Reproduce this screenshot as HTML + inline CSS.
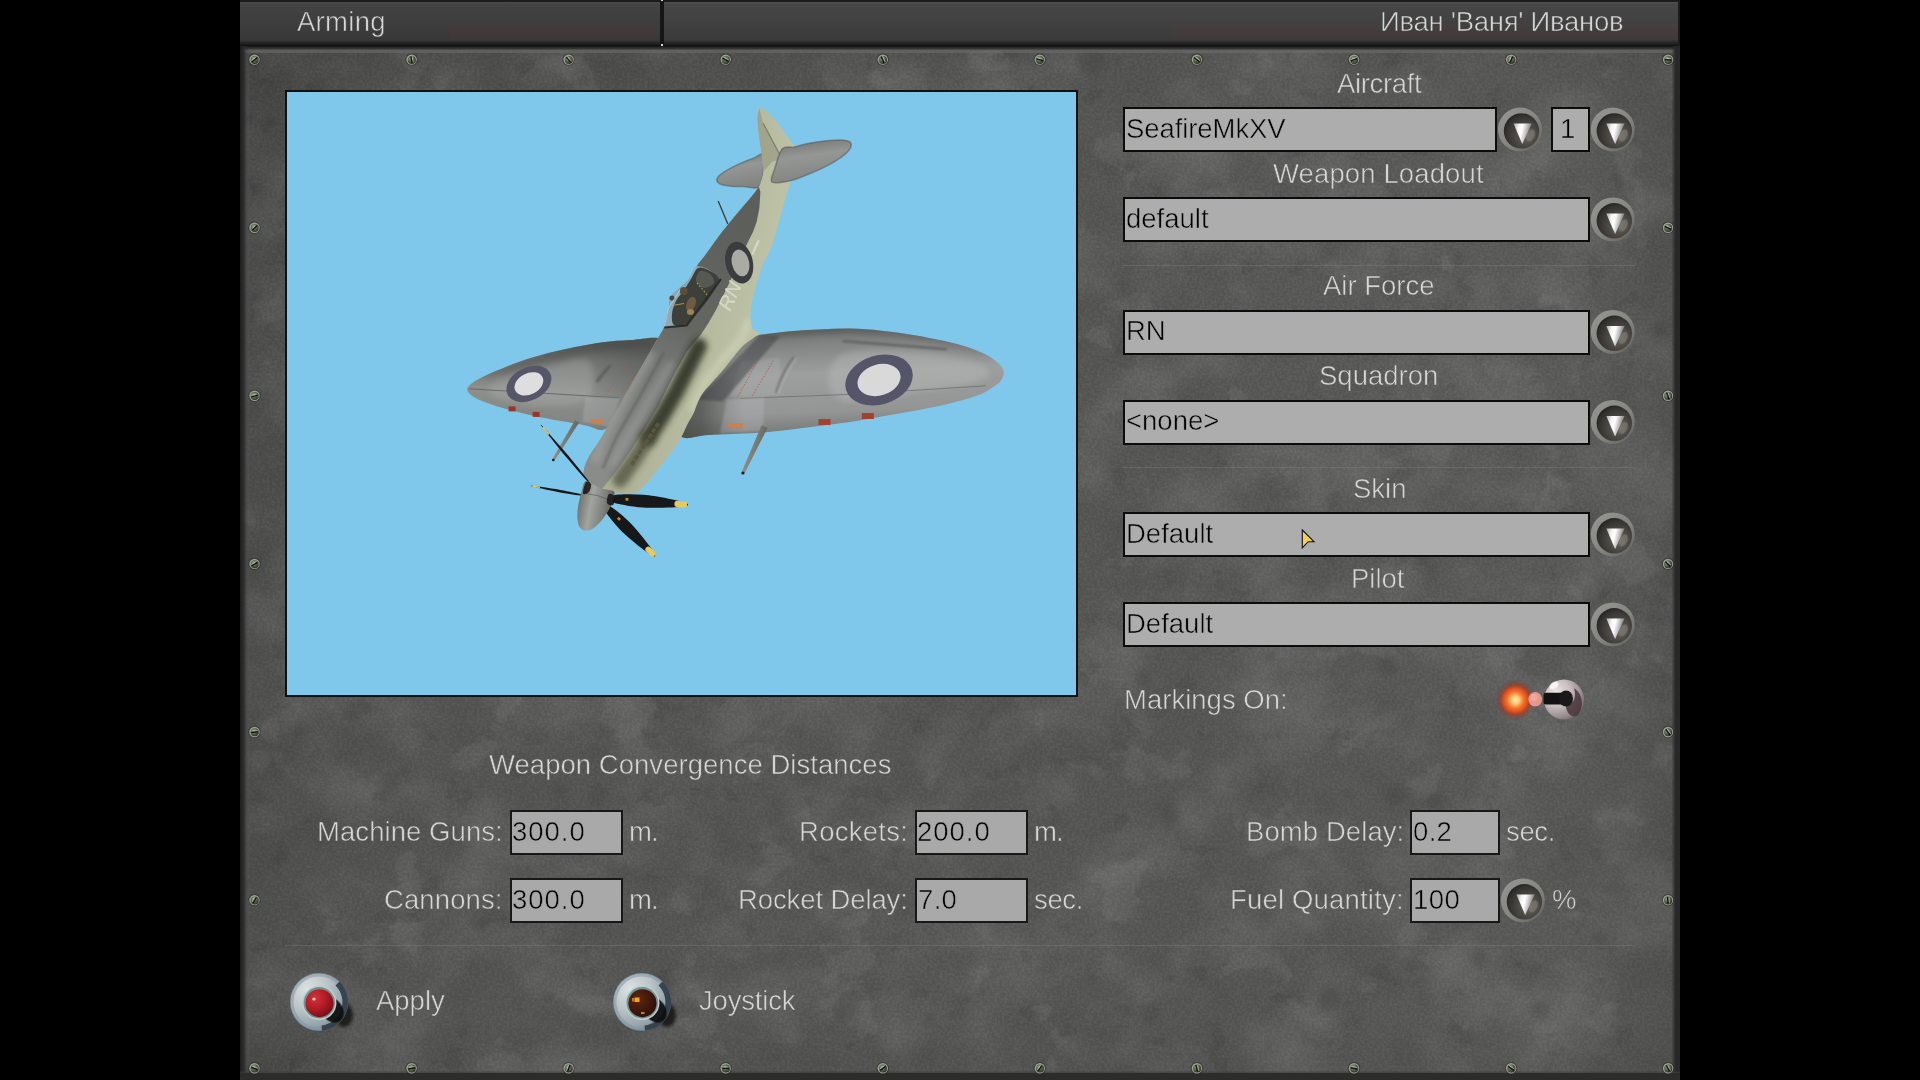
<!DOCTYPE html>
<html lang="en">
<head>
<meta charset="utf-8">
<title>Arming</title>
<style>
html,body{margin:0;padding:0;background:#000;}
body{width:1920px;height:1080px;overflow:hidden;position:relative;font-family:"Liberation Sans",sans-serif;font-size:27.5px;}
.abs{position:absolute;}
#barL{position:absolute;left:240px;top:0;width:420px;height:46px;background:linear-gradient(#1c1c1c 0,#1c1c1c 2px,#4c4c4c 2px,#434343 4px,#3e3e3e 22px,#383838 40px,#2a2a2a 42px,#1a1a1a 45px,#0c0c0c 46px);}
#barR{position:absolute;left:664px;top:0;width:1014px;height:46px;background:linear-gradient(#1c1c1c 0,#1c1c1c 2px,#525252 2px,#474747 4px,#414141 22px,#3a3a3a 40px,#2a2a2a 42px,#1a1a1a 45px,#0c0c0c 46px);border-right:2px solid #1c1c1c;}
#barGap{position:absolute;left:660px;top:0;width:4px;height:46px;background:#161616;}
#panel{position:absolute;left:240px;top:46px;width:1440px;height:1034px;background:#5f5f5d;overflow:hidden;}
.t{will-change:transform;position:absolute;white-space:nowrap;line-height:32px;height:32px;color:#d6d6d6;-webkit-text-stroke:0.55px #5a5a59;}
.k{color:#000;-webkit-text-stroke:0.55px #adadad;}
.b{-webkit-text-stroke:0.55px #414141;}
.k2{-webkit-text-stroke:0.55px #a9a9a9;}
.box{position:absolute;box-sizing:border-box;border:2px solid #0c0c0c;background:#adadad;height:45px;}
.sep{position:absolute;height:1px;background:rgba(150,150,146,.26);}
</style>
</head>
<body>
<div id="barL"><div class="abs" style="left:210px;top:23px;width:208px;height:17px;background:rgba(96,56,52,.15)"></div></div><div id="barGap"><div class="abs" style="left:1px;top:0;width:2px;height:1px;background:#d8d8d8"></div><div class="abs" style="left:1px;top:44px;width:2px;height:1.5px;background:#d8d8d8"></div></div><div id="barR"><div class="abs" style="left:507px;top:23px;width:506px;height:17px;background:rgba(96,56,52,.14)"></div></div>
<div id="panel">
<svg class="abs" style="left:0;top:0" width="1440" height="1034" viewBox="0 0 1440 1034">
<defs>
<filter id="tex" x="0" y="0" width="100%" height="100%" color-interpolation-filters="sRGB">
<feTurbulence type="fractalNoise" baseFrequency="0.011 0.013" numOctaves="5" seed="7" result="n"/>
<feColorMatrix in="n" type="matrix" values="0 0 0 0 0.62  0 0 0 0 0.62  0 0 0 0 0.62  2.6 0 0 0 -1.12"/>
</filter>
<filter id="tex2" x="0" y="0" width="100%" height="100%" color-interpolation-filters="sRGB">
<feTurbulence type="fractalNoise" baseFrequency="0.02 0.022" numOctaves="4" seed="23" result="n"/>
<feColorMatrix in="n" type="matrix" values="0 0 0 0 0.2  0 0 0 0 0.2  0 0 0 0 0.2  0 2.4 0 0 -1.18"/>
</filter>
<filter id="tex3" x="0" y="0" width="100%" height="100%" color-interpolation-filters="sRGB">
<feTurbulence type="fractalNoise" baseFrequency="0.014 0.016" numOctaves="5" seed="41" result="n"/>
<feColorMatrix in="n" type="matrix" values="0 0 0 0 0.72  0 0 0 0 0.73  0 0 0 0 0.72  14 0 0 0 -9.3"/>
</filter>
<filter id="tex4" x="0" y="0" width="100%" height="100%" color-interpolation-filters="sRGB">
<feTurbulence type="fractalNoise" baseFrequency="0.03 0.034" numOctaves="4" seed="77" result="n"/>
<feColorMatrix in="n" type="matrix" values="0 0 0 0 0.18  0 0 0 0 0.18  0 0 0 0 0.17  0 -12 0 0 3.9"/>
</filter>
<linearGradient id="vdiag" x1="0" y1="0.15" x2="1" y2="0"><stop offset="0" stop-color="#000" stop-opacity=".02"/><stop offset="0.4" stop-color="#000" stop-opacity="0"/><stop offset="0.55" stop-color="#fff" stop-opacity="0"/><stop offset="0.8" stop-color="#fff" stop-opacity=".025"/><stop offset="1" stop-color="#fff" stop-opacity=".03"/></linearGradient>
<filter id="grain" x="0" y="0" width="100%" height="100%" color-interpolation-filters="sRGB">
<feTurbulence type="fractalNoise" baseFrequency="0.4" numOctaves="2" seed="3" result="n"/>
<feColorMatrix in="n" type="matrix" values="3 0 0 0 -1.12  3 0 0 0 -1.12  3 0 0 0 -1.12  0 0 0 0 1"/>
</filter>
<filter id="cb"><feGaussianBlur stdDeviation="3"/></filter>
<linearGradient id="vre" x1="0" y1="0" x2="1" y2="0"><stop offset="0" stop-color="#282828" stop-opacity="0"/><stop offset="1" stop-color="#282828" stop-opacity="1"/></linearGradient>
<linearGradient id="vle" x1="0" y1="0" x2="1" y2="0"><stop offset="0" stop-color="#1e1e1e" stop-opacity="1"/><stop offset="0.3" stop-color="#262626" stop-opacity=".9"/><stop offset="0.6" stop-color="#2c2c2c" stop-opacity=".45"/><stop offset="1" stop-color="#2c2c2c" stop-opacity="0"/></linearGradient>
<linearGradient id="vte" x1="0" y1="0" x2="0" y2="1"><stop offset="0" stop-color="#101010"/><stop offset="0.3" stop-color="#282828"/><stop offset="1" stop-color="#484848"/></linearGradient>
<linearGradient id="vl" x1="0" y1="0" x2="1" y2="0"><stop offset="0" stop-color="#000" stop-opacity=".09"/><stop offset="0.035" stop-color="#000" stop-opacity=".05"/><stop offset="0.09" stop-color="#000" stop-opacity="0"/><stop offset="0.92" stop-color="#000" stop-opacity="0"/><stop offset="1" stop-color="#000" stop-opacity=".1"/></linearGradient>
<radialGradient id="vtl" cx="0" cy="0" r="1"><stop offset="0" stop-color="#000" stop-opacity=".1"/><stop offset="0.5" stop-color="#000" stop-opacity=".04"/><stop offset="1" stop-color="#000" stop-opacity="0"/></radialGradient>
<linearGradient id="vt" x1="0" y1="0" x2="0" y2="1"><stop offset="0" stop-color="#000" stop-opacity=".06"/><stop offset="0.08" stop-color="#000" stop-opacity="0"/><stop offset="0.94" stop-color="#000" stop-opacity="0"/><stop offset="1" stop-color="#000" stop-opacity=".05"/></linearGradient>
</defs>
<rect width="1440" height="1034" fill="#565655"/>
<rect width="1440" height="1034" filter="url(#tex)" opacity=".22"/>
<rect width="1440" height="1034" filter="url(#tex2)" opacity=".16"/>
<rect width="1440" height="1034" filter="url(#tex3)" opacity=".09"/>
<rect width="1440" height="1034" filter="url(#tex4)" opacity=".12"/>
<rect width="1440" height="1034" fill="url(#vdiag)"/>
<rect width="1440" height="1034" filter="url(#grain)" opacity=".03"/>
<g fill="#3f3f3e" opacity=".32" filter="url(#cb)"><circle cx="1148" cy="619" r="11"/><circle cx="905" cy="634" r="9"/><circle cx="1030" cy="611" r="6"/><circle cx="1155" cy="749" r="10"/><circle cx="930" cy="774" r="11"/><circle cx="1195" cy="754" r="9"/><circle cx="1300" cy="964" r="10"/><circle cx="1240" cy="914" r="9"/><circle cx="1090" cy="954" r="12"/><circle cx="910" cy="969" r="10"/><circle cx="1360" cy="894" r="9"/><circle cx="420" cy="939" r="11"/><circle cx="605" cy="964" r="12"/><circle cx="690" cy="974" r="8"/><circle cx="150" cy="739" r="10"/><circle cx="320" cy="744" r="7"/><circle cx="790" cy="239" r="9"/><circle cx="850" cy="14" r="14"/><circle cx="770" cy="4" r="9"/><circle cx="900" cy="374" r="9"/><circle cx="1420" cy="284" r="8"/><circle cx="240" cy="879" r="8"/><circle cx="60" cy="684" r="9"/></g>
<rect width="1440" height="1034" fill="url(#vl)"/>
<rect width="1440" height="1034" fill="url(#vt)"/>
<rect width="700" height="700" fill="url(#vtl)"/>
<rect x="0" y="0" width="1440" height="4.5" fill="url(#vte)"/>
<rect x="4" y="3.5" width="1431" height="3.5" fill="#70706e" opacity=".55"/>
<rect x="0" y="0" width="10" height="1034" fill="url(#vle)"/>
<rect x="5.5" y="5" width="4" height="1021" fill="#747472" opacity=".2"/>
<rect x="1431.5" y="0" width="4" height="1034" fill="url(#vre)"/><rect x="1435" y="0" width="5" height="1034" fill="#282828"/>
<rect x="0" y="1025.5" width="1440" height="2.5" fill="#3e3e3c" opacity=".6"/><rect x="0" y="1027" width="1440" height="7" fill="#2c2c2a"/>
</svg>
</div>
<svg class="abs" style="left:0;top:0" width="1920" height="1080" viewBox="0 0 1920 1080"><defs><radialGradient id="grv" cx="0.4" cy="0.35" r="0.7"><stop offset="0" stop-color="#a8b29e"/><stop offset="0.45" stop-color="#5c6852"/><stop offset="1" stop-color="#262e20"/></radialGradient></defs>
<g transform="translate(254.5 59.6)"><circle r="6.2" fill="#22241f" opacity=".5"/><circle r="5.2" fill="#9aa292"/><circle cx="0.2" cy="0.3" r="4" fill="url(#grv)"/><g transform="rotate(-40)"><path d="M-3.2 -1.1 L3.2 -1.1" stroke="#c4ccba" stroke-width=".9" opacity=".7"/><path d="M-3.4 0.2 L3.4 0.2" stroke="#10180a" stroke-width="1.4"/></g></g>
<g transform="translate(254.5 1068.2)"><circle r="6.2" fill="#22241f" opacity=".5"/><circle r="5.2" fill="#9aa292"/><circle cx="0.2" cy="0.3" r="4" fill="url(#grv)"/><g transform="rotate(20)"><path d="M-3.2 -1.1 L3.2 -1.1" stroke="#c4ccba" stroke-width=".9" opacity=".7"/><path d="M-3.4 0.2 L3.4 0.2" stroke="#10180a" stroke-width="1.4"/></g></g>
<g transform="translate(411.6 59.6)"><circle r="6.2" fill="#22241f" opacity=".5"/><circle r="5.2" fill="#9aa292"/><circle cx="0.2" cy="0.3" r="4" fill="url(#grv)"/><g transform="rotate(80)"><path d="M-3.2 -1.1 L3.2 -1.1" stroke="#c4ccba" stroke-width=".9" opacity=".7"/><path d="M-3.4 0.2 L3.4 0.2" stroke="#10180a" stroke-width="1.4"/></g></g>
<g transform="translate(411.6 1068.2)"><circle r="6.2" fill="#22241f" opacity=".5"/><circle r="5.2" fill="#9aa292"/><circle cx="0.2" cy="0.3" r="4" fill="url(#grv)"/><g transform="rotate(-10)"><path d="M-3.2 -1.1 L3.2 -1.1" stroke="#c4ccba" stroke-width=".9" opacity=".7"/><path d="M-3.4 0.2 L3.4 0.2" stroke="#10180a" stroke-width="1.4"/></g></g>
<g transform="translate(568.6 59.6)"><circle r="6.2" fill="#22241f" opacity=".5"/><circle r="5.2" fill="#9aa292"/><circle cx="0.2" cy="0.3" r="4" fill="url(#grv)"/><g transform="rotate(50)"><path d="M-3.2 -1.1 L3.2 -1.1" stroke="#c4ccba" stroke-width=".9" opacity=".7"/><path d="M-3.4 0.2 L3.4 0.2" stroke="#10180a" stroke-width="1.4"/></g></g>
<g transform="translate(568.6 1068.2)"><circle r="6.2" fill="#22241f" opacity=".5"/><circle r="5.2" fill="#9aa292"/><circle cx="0.2" cy="0.3" r="4" fill="url(#grv)"/><g transform="rotate(-70)"><path d="M-3.2 -1.1 L3.2 -1.1" stroke="#c4ccba" stroke-width=".9" opacity=".7"/><path d="M-3.4 0.2 L3.4 0.2" stroke="#10180a" stroke-width="1.4"/></g></g>
<g transform="translate(725.7 59.6)"><circle r="6.2" fill="#22241f" opacity=".5"/><circle r="5.2" fill="#9aa292"/><circle cx="0.2" cy="0.3" r="4" fill="url(#grv)"/><g transform="rotate(30)"><path d="M-3.2 -1.1 L3.2 -1.1" stroke="#c4ccba" stroke-width=".9" opacity=".7"/><path d="M-3.4 0.2 L3.4 0.2" stroke="#10180a" stroke-width="1.4"/></g></g>
<g transform="translate(725.7 1068.2)"><circle r="6.2" fill="#22241f" opacity=".5"/><circle r="5.2" fill="#9aa292"/><circle cx="0.2" cy="0.3" r="4" fill="url(#grv)"/><g transform="rotate(0)"><path d="M-3.2 -1.1 L3.2 -1.1" stroke="#c4ccba" stroke-width=".9" opacity=".7"/><path d="M-3.4 0.2 L3.4 0.2" stroke="#10180a" stroke-width="1.4"/></g></g>
<g transform="translate(882.8 59.6)"><circle r="6.2" fill="#22241f" opacity=".5"/><circle r="5.2" fill="#9aa292"/><circle cx="0.2" cy="0.3" r="4" fill="url(#grv)"/><g transform="rotate(65)"><path d="M-3.2 -1.1 L3.2 -1.1" stroke="#c4ccba" stroke-width=".9" opacity=".7"/><path d="M-3.4 0.2 L3.4 0.2" stroke="#10180a" stroke-width="1.4"/></g></g>
<g transform="translate(882.8 1068.2)"><circle r="6.2" fill="#22241f" opacity=".5"/><circle r="5.2" fill="#9aa292"/><circle cx="0.2" cy="0.3" r="4" fill="url(#grv)"/><g transform="rotate(-35)"><path d="M-3.2 -1.1 L3.2 -1.1" stroke="#c4ccba" stroke-width=".9" opacity=".7"/><path d="M-3.4 0.2 L3.4 0.2" stroke="#10180a" stroke-width="1.4"/></g></g>
<g transform="translate(1039.8 59.6)"><circle r="6.2" fill="#22241f" opacity=".5"/><circle r="5.2" fill="#9aa292"/><circle cx="0.2" cy="0.3" r="4" fill="url(#grv)"/><g transform="rotate(15)"><path d="M-3.2 -1.1 L3.2 -1.1" stroke="#c4ccba" stroke-width=".9" opacity=".7"/><path d="M-3.4 0.2 L3.4 0.2" stroke="#10180a" stroke-width="1.4"/></g></g>
<g transform="translate(1039.8 1068.2)"><circle r="6.2" fill="#22241f" opacity=".5"/><circle r="5.2" fill="#9aa292"/><circle cx="0.2" cy="0.3" r="4" fill="url(#grv)"/><g transform="rotate(-55)"><path d="M-3.2 -1.1 L3.2 -1.1" stroke="#c4ccba" stroke-width=".9" opacity=".7"/><path d="M-3.4 0.2 L3.4 0.2" stroke="#10180a" stroke-width="1.4"/></g></g>
<g transform="translate(1196.9 59.6)"><circle r="6.2" fill="#22241f" opacity=".5"/><circle r="5.2" fill="#9aa292"/><circle cx="0.2" cy="0.3" r="4" fill="url(#grv)"/><g transform="rotate(40)"><path d="M-3.2 -1.1 L3.2 -1.1" stroke="#c4ccba" stroke-width=".9" opacity=".7"/><path d="M-3.4 0.2 L3.4 0.2" stroke="#10180a" stroke-width="1.4"/></g></g>
<g transform="translate(1196.9 1068.2)"><circle r="6.2" fill="#22241f" opacity=".5"/><circle r="5.2" fill="#9aa292"/><circle cx="0.2" cy="0.3" r="4" fill="url(#grv)"/><g transform="rotate(75)"><path d="M-3.2 -1.1 L3.2 -1.1" stroke="#c4ccba" stroke-width=".9" opacity=".7"/><path d="M-3.4 0.2 L3.4 0.2" stroke="#10180a" stroke-width="1.4"/></g></g>
<g transform="translate(1354.0 59.6)"><circle r="6.2" fill="#22241f" opacity=".5"/><circle r="5.2" fill="#9aa292"/><circle cx="0.2" cy="0.3" r="4" fill="url(#grv)"/><g transform="rotate(-20)"><path d="M-3.2 -1.1 L3.2 -1.1" stroke="#c4ccba" stroke-width=".9" opacity=".7"/><path d="M-3.4 0.2 L3.4 0.2" stroke="#10180a" stroke-width="1.4"/></g></g>
<g transform="translate(1354.0 1068.2)"><circle r="6.2" fill="#22241f" opacity=".5"/><circle r="5.2" fill="#9aa292"/><circle cx="0.2" cy="0.3" r="4" fill="url(#grv)"/><g transform="rotate(10)"><path d="M-3.2 -1.1 L3.2 -1.1" stroke="#c4ccba" stroke-width=".9" opacity=".7"/><path d="M-3.4 0.2 L3.4 0.2" stroke="#10180a" stroke-width="1.4"/></g></g>
<g transform="translate(1511.1 59.6)"><circle r="6.2" fill="#22241f" opacity=".5"/><circle r="5.2" fill="#9aa292"/><circle cx="0.2" cy="0.3" r="4" fill="url(#grv)"/><g transform="rotate(-65)"><path d="M-3.2 -1.1 L3.2 -1.1" stroke="#c4ccba" stroke-width=".9" opacity=".7"/><path d="M-3.4 0.2 L3.4 0.2" stroke="#10180a" stroke-width="1.4"/></g></g>
<g transform="translate(1511.1 1068.2)"><circle r="6.2" fill="#22241f" opacity=".5"/><circle r="5.2" fill="#9aa292"/><circle cx="0.2" cy="0.3" r="4" fill="url(#grv)"/><g transform="rotate(35)"><path d="M-3.2 -1.1 L3.2 -1.1" stroke="#c4ccba" stroke-width=".9" opacity=".7"/><path d="M-3.4 0.2 L3.4 0.2" stroke="#10180a" stroke-width="1.4"/></g></g>
<g transform="translate(1668.1 59.6)"><circle r="6.2" fill="#22241f" opacity=".5"/><circle r="5.2" fill="#9aa292"/><circle cx="0.2" cy="0.3" r="4" fill="url(#grv)"/><g transform="rotate(5)"><path d="M-3.2 -1.1 L3.2 -1.1" stroke="#c4ccba" stroke-width=".9" opacity=".7"/><path d="M-3.4 0.2 L3.4 0.2" stroke="#10180a" stroke-width="1.4"/></g></g>
<g transform="translate(1668.1 1068.2)"><circle r="6.2" fill="#22241f" opacity=".5"/><circle r="5.2" fill="#9aa292"/><circle cx="0.2" cy="0.3" r="4" fill="url(#grv)"/><g transform="rotate(60)"><path d="M-3.2 -1.1 L3.2 -1.1" stroke="#c4ccba" stroke-width=".9" opacity=".7"/><path d="M-3.4 0.2 L3.4 0.2" stroke="#10180a" stroke-width="1.4"/></g></g>
<g transform="translate(254.5 227.7)"><circle r="6.2" fill="#22241f" opacity=".5"/><circle r="5.2" fill="#9aa292"/><circle cx="0.2" cy="0.3" r="4" fill="url(#grv)"/><g transform="rotate(-45)"><path d="M-3.2 -1.1 L3.2 -1.1" stroke="#c4ccba" stroke-width=".9" opacity=".7"/><path d="M-3.4 0.2 L3.4 0.2" stroke="#10180a" stroke-width="1.4"/></g></g>
<g transform="translate(1668.0 227.7)"><circle r="6.2" fill="#22241f" opacity=".5"/><circle r="5.2" fill="#9aa292"/><circle cx="0.2" cy="0.3" r="4" fill="url(#grv)"/><g transform="rotate(25)"><path d="M-3.2 -1.1 L3.2 -1.1" stroke="#c4ccba" stroke-width=".9" opacity=".7"/><path d="M-3.4 0.2 L3.4 0.2" stroke="#10180a" stroke-width="1.4"/></g></g>
<g transform="translate(254.5 395.8)"><circle r="6.2" fill="#22241f" opacity=".5"/><circle r="5.2" fill="#9aa292"/><circle cx="0.2" cy="0.3" r="4" fill="url(#grv)"/><g transform="rotate(-15)"><path d="M-3.2 -1.1 L3.2 -1.1" stroke="#c4ccba" stroke-width=".9" opacity=".7"/><path d="M-3.4 0.2 L3.4 0.2" stroke="#10180a" stroke-width="1.4"/></g></g>
<g transform="translate(1668.0 395.8)"><circle r="6.2" fill="#22241f" opacity=".5"/><circle r="5.2" fill="#9aa292"/><circle cx="0.2" cy="0.3" r="4" fill="url(#grv)"/><g transform="rotate(70)"><path d="M-3.2 -1.1 L3.2 -1.1" stroke="#c4ccba" stroke-width=".9" opacity=".7"/><path d="M-3.4 0.2 L3.4 0.2" stroke="#10180a" stroke-width="1.4"/></g></g>
<g transform="translate(254.5 563.9)"><circle r="6.2" fill="#22241f" opacity=".5"/><circle r="5.2" fill="#9aa292"/><circle cx="0.2" cy="0.3" r="4" fill="url(#grv)"/><g transform="rotate(-30)"><path d="M-3.2 -1.1 L3.2 -1.1" stroke="#c4ccba" stroke-width=".9" opacity=".7"/><path d="M-3.4 0.2 L3.4 0.2" stroke="#10180a" stroke-width="1.4"/></g></g>
<g transform="translate(1668.0 563.9)"><circle r="6.2" fill="#22241f" opacity=".5"/><circle r="5.2" fill="#9aa292"/><circle cx="0.2" cy="0.3" r="4" fill="url(#grv)"/><g transform="rotate(45)"><path d="M-3.2 -1.1 L3.2 -1.1" stroke="#c4ccba" stroke-width=".9" opacity=".7"/><path d="M-3.4 0.2 L3.4 0.2" stroke="#10180a" stroke-width="1.4"/></g></g>
<g transform="translate(254.5 732.0)"><circle r="6.2" fill="#22241f" opacity=".5"/><circle r="5.2" fill="#9aa292"/><circle cx="0.2" cy="0.3" r="4" fill="url(#grv)"/><g transform="rotate(-5)"><path d="M-3.2 -1.1 L3.2 -1.1" stroke="#c4ccba" stroke-width=".9" opacity=".7"/><path d="M-3.4 0.2 L3.4 0.2" stroke="#10180a" stroke-width="1.4"/></g></g>
<g transform="translate(1668.0 732.0)"><circle r="6.2" fill="#22241f" opacity=".5"/><circle r="5.2" fill="#9aa292"/><circle cx="0.2" cy="0.3" r="4" fill="url(#grv)"/><g transform="rotate(55)"><path d="M-3.2 -1.1 L3.2 -1.1" stroke="#c4ccba" stroke-width=".9" opacity=".7"/><path d="M-3.4 0.2 L3.4 0.2" stroke="#10180a" stroke-width="1.4"/></g></g>
<g transform="translate(254.5 900.1)"><circle r="6.2" fill="#22241f" opacity=".5"/><circle r="5.2" fill="#9aa292"/><circle cx="0.2" cy="0.3" r="4" fill="url(#grv)"/><g transform="rotate(-60)"><path d="M-3.2 -1.1 L3.2 -1.1" stroke="#c4ccba" stroke-width=".9" opacity=".7"/><path d="M-3.4 0.2 L3.4 0.2" stroke="#10180a" stroke-width="1.4"/></g></g>
<g transform="translate(1668.0 900.1)"><circle r="6.2" fill="#22241f" opacity=".5"/><circle r="5.2" fill="#9aa292"/><circle cx="0.2" cy="0.3" r="4" fill="url(#grv)"/><g transform="rotate(85)"><path d="M-3.2 -1.1 L3.2 -1.1" stroke="#c4ccba" stroke-width=".9" opacity=".7"/><path d="M-3.4 0.2 L3.4 0.2" stroke="#10180a" stroke-width="1.4"/></g></g>
</svg>
<div class="abs" style="left:285px;top:90px;width:793px;height:607px;box-sizing:border-box;border:2px solid #14100f;background:#80c8eb"></div>
<svg class="abs" style="left:0;top:0" width="1920" height="1080" viewBox="0 0 1920 1080">
<defs>
<linearGradient id="gwR" x1="0" y1="0" x2="0.12" y2="1"><stop offset="0" stop-color="#5c5e5c"/><stop offset="0.12" stop-color="#7b7d7c"/><stop offset="0.45" stop-color="#9d9f9f"/><stop offset="0.8" stop-color="#949695"/><stop offset="1" stop-color="#767876"/></linearGradient>
<linearGradient id="gwL" x1="0.1" y1="0" x2="0" y2="1"><stop offset="0" stop-color="#565856"/><stop offset="0.2" stop-color="#737573"/><stop offset="0.55" stop-color="#8e908e"/><stop offset="1" stop-color="#7e807e"/></linearGradient>
<linearGradient id="gRoot" x1="0" y1="0" x2="1" y2="0"><stop offset="0" stop-color="#3c3e3a" stop-opacity=".8"/><stop offset="0.45" stop-color="#3c3e3a" stop-opacity=".6"/><stop offset="1" stop-color="#3c3e3a" stop-opacity="0"/></linearGradient>
<linearGradient id="gRootL" x1="1" y1="0" x2="0" y2="0"><stop offset="0" stop-color="#4a4c48" stop-opacity=".5"/><stop offset="1" stop-color="#4a4c48" stop-opacity="0"/></linearGradient>
<linearGradient id="gfU" gradientUnits="userSpaceOnUse" x1="740" y1="200" x2="600" y2="470"><stop offset="0" stop-color="#5c5e5a"/><stop offset="0.45" stop-color="#646662"/><stop offset="0.62" stop-color="#787a78"/><stop offset="1" stop-color="#8a8c8a"/></linearGradient>
<linearGradient id="gfG" x1="0" y1="0" x2="1" y2="0.45"><stop offset="0" stop-color="#888b72"/><stop offset="0.4" stop-color="#a9ad92"/><stop offset="1" stop-color="#c2c6aa"/></linearGradient>
<linearGradient id="gsp" x1="0" y1="0.3" x2="1" y2="0.55"><stop offset="0" stop-color="#686a66"/><stop offset="0.38" stop-color="#a2a4a0"/><stop offset="0.75" stop-color="#7a7c78"/><stop offset="1" stop-color="#50524e"/></linearGradient>
<linearGradient id="gst" x1="0" y1="0" x2="0.25" y2="1"><stop offset="0" stop-color="#6e706e"/><stop offset="0.45" stop-color="#959795"/><stop offset="1" stop-color="#838583"/></linearGradient>
<linearGradient id="gcan" x1="0" y1="0" x2="1" y2="0.3"><stop offset="0" stop-color="#a0a29c"/><stop offset="1" stop-color="#60625e"/></linearGradient>
<filter id="bl1" filterUnits="userSpaceOnUse" x="280" y="80" width="800" height="620"><feGaussianBlur stdDeviation="1.2"/></filter>
<filter id="bl3" filterUnits="userSpaceOnUse" x="280" y="80" width="800" height="620"><feGaussianBlur stdDeviation="3"/></filter>
</defs>
<clipPath id="cpR"><path d="M740.0 337.0 C744.0 335.3 747.9 336.3 755.7 335.4 C763.6 334.5 776.7 332.5 787.2 331.5 C797.7 330.5 808.2 330.1 818.7 329.6 C829.2 329.1 839.7 328.5 850.2 328.6 C860.7 328.8 871.2 329.6 881.7 330.7 C892.2 331.7 902.7 333.2 913.1 334.9 C923.6 336.6 935.4 338.9 944.6 340.9 C953.8 343.0 960.9 344.7 968.2 347.2 C975.6 349.7 983.5 353.0 988.7 355.9 C993.9 358.8 997.2 361.9 999.7 364.5 C1002.2 367.2 1003.4 369.0 1003.7 371.6 C1003.9 374.2 1003.3 377.5 1001.3 380.3 C999.3 383.0 996.0 385.5 991.8 388.1 C987.7 390.8 984.0 393.3 976.1 396.0 C968.2 398.8 955.1 402.2 944.6 404.7 C934.1 407.2 923.6 409.0 913.1 411.0 C902.7 412.9 892.2 414.6 881.7 416.5 C871.2 418.3 860.7 420.4 850.2 422.0 C839.7 423.6 829.2 424.6 818.7 425.9 C808.2 427.2 797.7 428.7 787.2 429.9 C776.7 431.0 768.9 432.1 755.7 433.0 C742.6 433.9 720.7 434.4 708.3 435.0 C696.0 435.7 687.9 440.1 681.7 437.1 C675.5 434.2 669.9 425.2 671.3 417.2 C672.6 409.3 679.8 401.4 689.8 389.4 C699.8 377.5 723.1 354.2 731.5 345.5 C739.8 336.7 736.0 338.7 740.0 337.0Z"/></clipPath>
<path d="M740.0 337.0 C744.0 335.3 747.9 336.3 755.7 335.4 C763.6 334.5 776.7 332.5 787.2 331.5 C797.7 330.5 808.2 330.1 818.7 329.6 C829.2 329.1 839.7 328.5 850.2 328.6 C860.7 328.8 871.2 329.6 881.7 330.7 C892.2 331.7 902.7 333.2 913.1 334.9 C923.6 336.6 935.4 338.9 944.6 340.9 C953.8 343.0 960.9 344.7 968.2 347.2 C975.6 349.7 983.5 353.0 988.7 355.9 C993.9 358.8 997.2 361.9 999.7 364.5 C1002.2 367.2 1003.4 369.0 1003.7 371.6 C1003.9 374.2 1003.3 377.5 1001.3 380.3 C999.3 383.0 996.0 385.5 991.8 388.1 C987.7 390.8 984.0 393.3 976.1 396.0 C968.2 398.8 955.1 402.2 944.6 404.7 C934.1 407.2 923.6 409.0 913.1 411.0 C902.7 412.9 892.2 414.6 881.7 416.5 C871.2 418.3 860.7 420.4 850.2 422.0 C839.7 423.6 829.2 424.6 818.7 425.9 C808.2 427.2 797.7 428.7 787.2 429.9 C776.7 431.0 768.9 432.1 755.7 433.0 C742.6 433.9 720.7 434.4 708.3 435.0 C696.0 435.7 687.9 440.1 681.7 437.1 C675.5 434.2 669.9 425.2 671.3 417.2 C672.6 409.3 679.8 401.4 689.8 389.4 C699.8 377.5 723.1 354.2 731.5 345.5 C739.8 336.7 736.0 338.7 740.0 337.0Z" fill="url(#gwR)"/>
<g clip-path="url(#cpR)"><rect x="668" y="320" width="75" height="130" fill="url(#gRoot)"/>
<path d="M850.2 351.9 C867.0 348.3 906.3 350.9 928.9 353.5 C951.4 356.1 977.7 363.0 985.6 367.7 C993.4 372.4 990.8 377.4 976.1 381.9 C961.4 386.3 919.7 391.3 897.4 394.4 C875.1 397.6 853.9 403.9 842.3 400.7 C830.8 397.6 826.8 383.7 828.1 375.6 C829.5 367.4 833.4 355.6 850.2 351.9Z" fill="#c2c4c4" opacity=".35" filter="url(#bl3)"/>
<path d="M771.5 329.9 C784.6 327.9 823.9 325.1 850.2 326.0 C876.4 326.9 905.3 330.3 928.9 335.4 C952.5 340.5 991.8 355.7 991.8 356.7 C991.8 357.6 952.5 345.0 928.9 341.2 C905.3 337.4 876.4 334.4 850.2 333.8 C823.9 333.3 784.6 338.4 771.5 337.8 C758.4 337.1 758.4 331.9 771.5 329.9Z" fill="#4c4e4c" opacity=".5" filter="url(#bl3)"/>
</g>
<path d="M843.9 341.2 L946.2 349.1" stroke="#555755" stroke-width="2.2" stroke-linecap="round" opacity=".8" filter="url(#bl1)"/>
<path d="M740.0 398.4 L850.2 394.4 L985.6 385.8" stroke="#6c6e6c" stroke-width="1" fill="none" opacity=".8"/>
<clipPath id="cpL"><path d="M661.1 339.2 C656.9 335.6 640.3 339.6 630.6 340.1 C620.8 340.6 612.0 341.1 602.8 342.2 C593.5 343.4 584.3 345.2 575.0 347.1 C565.7 348.9 556.5 350.9 547.2 353.3 C538.0 355.8 528.7 358.4 519.4 361.7 C510.2 364.9 499.1 369.5 491.7 372.8 C484.3 376.0 479.1 378.6 475.0 381.1 C470.9 383.7 468.3 386.0 467.4 388.1 C466.4 390.1 467.7 391.8 469.4 393.6 C471.2 395.5 472.9 397.0 477.8 399.2 C482.6 401.4 491.7 404.6 498.6 406.8 C505.6 409.0 511.3 410.4 519.4 412.4 C527.5 414.3 538.0 416.8 547.2 418.6 C556.5 420.5 568.1 422.2 575.0 423.5 C581.9 424.7 584.4 425.2 588.9 426.2 C593.4 427.3 597.9 430.6 602.1 430.0 C606.2 429.4 608.4 428.1 613.9 422.8 C619.3 417.4 627.8 408.0 634.7 397.8 C641.7 387.6 651.2 371.4 655.6 361.7 C660.0 351.9 665.3 342.8 661.1 339.2Z"/></clipPath>
<path d="M661.1 339.2 C656.9 335.6 640.3 339.6 630.6 340.1 C620.8 340.6 612.0 341.1 602.8 342.2 C593.5 343.4 584.3 345.2 575.0 347.1 C565.7 348.9 556.5 350.9 547.2 353.3 C538.0 355.8 528.7 358.4 519.4 361.7 C510.2 364.9 499.1 369.5 491.7 372.8 C484.3 376.0 479.1 378.6 475.0 381.1 C470.9 383.7 468.3 386.0 467.4 388.1 C466.4 390.1 467.7 391.8 469.4 393.6 C471.2 395.5 472.9 397.0 477.8 399.2 C482.6 401.4 491.7 404.6 498.6 406.8 C505.6 409.0 511.3 410.4 519.4 412.4 C527.5 414.3 538.0 416.8 547.2 418.6 C556.5 420.5 568.1 422.2 575.0 423.5 C581.9 424.7 584.4 425.2 588.9 426.2 C593.4 427.3 597.9 430.6 602.1 430.0 C606.2 429.4 608.4 428.1 613.9 422.8 C619.3 417.4 627.8 408.0 634.7 397.8 C641.7 387.6 651.2 371.4 655.6 361.7 C660.0 351.9 665.3 342.8 661.1 339.2Z" fill="url(#gwL)"/>
<g clip-path="url(#cpL)"><rect x="585" y="330" width="80" height="110" fill="url(#gRootL)"/>
<path d="M491.7 385.3 C499.8 380.2 531.0 371.2 547.2 367.2 C563.4 363.3 581.9 356.6 588.9 361.7 C595.8 366.8 595.8 390.4 588.9 397.8 C581.9 405.2 562.3 406.1 547.2 406.1 C532.2 406.1 507.9 401.2 498.6 397.8 C489.4 394.3 483.6 390.4 491.7 385.3Z" fill="#b6b8b6" opacity=".3" filter="url(#bl3)"/>
<path d="M644.4 338.1 C635.2 337.6 605.1 341.2 588.9 343.6 C572.7 346.0 561.1 348.9 547.2 352.6 C533.3 356.3 517.1 361.6 505.6 365.8 C494.0 370.1 476.9 377.4 477.8 378.3 C478.7 379.3 499.1 374.3 511.1 371.4 C523.1 368.5 536.6 364.2 550.0 361.0 C563.4 357.7 575.9 354.4 591.7 351.9 C607.4 349.5 635.6 348.7 644.4 346.4 C653.2 344.1 653.7 338.5 644.4 338.1Z" fill="#4a4c4a" opacity=".5" filter="url(#bl3)"/>
</g>
<path d="M469.4 388.8 L619.4 397.8" stroke="#5c5e5c" stroke-width="1" fill="none" opacity=".8"/>
<path d="M609.7 365.8 L597.2 381.1" stroke="#4e504e" stroke-width="2.5" stroke-linecap="round" opacity=".7" filter="url(#bl1)"/>
<g clip-path="url(#cpL)"><path d="M585.3 396.7 L620.0 398.1 L611.7 427.2 L582.5 421.7 Z" fill="#bcbec0" opacity=".32" filter="url(#bl1)"/></g>
<g clip-path="url(#cpR)"><path d="M726.9 399.4 L764.4 396.7 L763.1 430.7 L720.0 433.5 Z" fill="#bcbec0" opacity=".32" filter="url(#bl1)"/><path d="M740.8 361.9 L780.0 357.8 L780.0 395.3 L729.7 396.7 Z" fill="#b4b6b8" opacity=".28" filter="url(#bl1)"/></g>
<g clip-path="url(#cpR)"><path d="M760.4 334.6 L780 336 L722.8 401.5 L698 399.4 Z" fill="#3c3e40" opacity=".5" filter="url(#bl1)"/></g>
<path d="M757.8 360.6 L737 398.1 M773.3 360.6 L752.6 395.5" stroke="#b8523c" stroke-width=".9" stroke-dasharray="1.6 1.4" opacity=".85" fill="none"/>
<path d="M794.1 356.7 Q783 371 775.9 393" stroke="#5a5c5c" stroke-width="2" fill="none" opacity=".7" filter="url(#bl1)"/>
<path d="M796.5 358 Q785.5 372 778.5 393" stroke="#c0c2c2" stroke-width="1.6" fill="none" opacity=".5" filter="url(#bl1)"/>
<path d="M629.2 365.8 L606.9 392.2 M643.1 364.4 L620.8 393.6" stroke="#b8523c" stroke-width=".8" stroke-dasharray="1.5 1.4" opacity=".8" fill="none"/>
<path d="M575.0 420.3 L552.2 459.3 L554.4 460.7 L579.0 422.7 Z" fill="url(#gcan)"/><circle cx="553.3" cy="460.0" r="1.3" fill="#1c1c1c"/>
<path d="M761.7 425.1 L741.5 472.3 L744.3 473.7 L767.5 427.9 Z" fill="url(#gcan)"/><circle cx="742.9" cy="473.0" r="1.6" fill="#1c1c1c"/>
<path d="M763.5 155.5 C762.4 151.0 757.6 156.9 753.5 158.3 C749.4 159.7 743.8 161.8 738.9 164.1 C734.0 166.4 727.9 169.5 724.3 171.9 C720.6 174.3 717.8 176.8 717.0 178.7 C716.2 180.6 717.4 182.4 719.4 183.6 C721.4 184.8 725.2 185.5 729.2 186.0 C733.2 186.5 738.6 186.6 743.7 186.5 C748.8 186.4 756.7 190.7 760.0 185.5 C763.3 180.3 764.6 160.0 763.5 155.5Z" fill="url(#gst)"/>
<path d="M763.5 155.5 C762.4 151.0 757.6 156.9 753.5 158.3 C749.4 159.7 743.8 161.8 738.9 164.1 C734.0 166.4 727.9 169.5 724.3 171.9 C720.6 174.3 717.8 176.8 717.0 178.7 C716.2 180.6 717.4 182.4 719.4 183.6 C721.4 184.8 725.2 185.5 729.2 186.0 C733.2 186.5 738.6 186.6 743.7 186.5 C748.8 186.4 756.7 190.7 760.0 185.5 C763.3 180.3 764.6 160.0 763.5 155.5Z" fill="none" stroke="#5c5e5c" stroke-width="1.6" opacity=".6"/>
<clipPath id="cpF"><path d="M759.3 108.2 C757.5 109.0 757.6 113.4 757.4 117.4 C757.2 121.4 757.8 127.1 758.3 132.0 C758.8 136.9 759.6 142.2 760.3 146.6 C760.9 151.0 761.7 154.1 762.2 158.3 C762.7 162.5 763.5 167.7 763.2 171.9 C762.9 176.1 761.1 181.0 760.3 183.6 C759.5 186.2 759.6 185.5 758.3 187.4 C757.0 189.3 755.2 191.8 752.5 195.2 C749.8 198.6 746.0 202.9 741.9 207.8 C737.8 212.7 732.0 219.5 728.0 224.4 C724.0 229.3 721.3 232.6 717.8 237.4 C714.2 242.2 710.2 248.2 706.7 253.1 C703.2 257.9 699.6 261.9 696.5 266.5 C693.4 271.1 690.9 276.8 688.1 280.4 C685.3 283.9 682.6 285.0 679.8 287.8 C676.9 290.6 672.9 293.6 671.0 297.0 C669.1 300.4 669.6 304.7 668.7 308.1 C667.9 311.5 666.7 314.3 665.9 317.4 C665.1 320.5 665.0 323.9 664.1 326.7 C663.2 329.5 662.8 329.9 660.4 334.1 C658.0 338.3 654.2 344.7 650.0 352.0 C645.8 359.3 640.3 368.7 635.0 378.0 C629.7 387.3 622.8 399.4 618.0 408.0 C613.2 416.6 609.5 423.5 606.1 429.4 C602.7 435.3 600.6 438.9 597.8 443.3 C595.0 447.7 591.7 451.6 589.4 455.8 C587.1 460.0 584.9 464.7 584.2 468.3 C583.5 471.9 582.7 473.9 585.3 477.5 C587.9 481.1 594.7 487.3 600.0 490.0 C605.3 492.7 611.6 493.1 617.2 493.6 C622.9 494.2 629.3 494.7 633.9 493.3 C638.5 491.9 640.8 489.2 645.0 485.0 C649.2 480.8 654.3 474.1 658.9 468.3 C663.5 462.5 669.1 455.4 672.8 450.3 C676.5 445.2 678.5 442.1 681.1 437.6 C683.7 433.1 686.0 427.2 688.1 423.1 C690.2 419.1 692.0 416.8 693.6 413.3 C695.2 409.8 696.2 405.7 697.8 402.2 C699.4 398.7 701.0 395.7 703.3 392.5 C705.6 389.3 708.5 386.5 711.7 382.8 C715.0 379.1 719.1 374.7 722.8 370.3 C726.5 365.9 730.4 360.6 733.9 356.4 C737.4 352.2 740.1 348.6 743.6 345.3 C747.1 342.1 752.1 338.8 754.7 336.9 C757.3 334.9 759.8 335.0 759.4 333.6 C759.0 332.2 754.0 330.9 752.5 328.5 C751.0 326.1 750.8 323.0 750.6 319.3 C750.4 315.6 750.4 311.2 751.1 306.3 C751.8 301.4 753.4 295.0 754.8 289.6 C756.2 284.2 758.0 278.2 759.4 273.9 C760.8 269.6 761.1 268.1 763.1 263.6 C765.1 259.1 768.9 253.7 771.5 246.7 C774.1 239.7 776.6 229.7 778.9 221.7 C781.2 213.7 783.5 205.3 785.4 198.5 C787.3 191.7 788.9 189.1 790.4 180.6 C791.9 172.1 794.1 153.9 794.3 147.6 C794.5 141.3 792.8 145.0 791.4 142.7 C790.0 140.4 787.9 137.2 785.6 134.0 C783.3 130.8 780.7 126.9 777.8 123.3 C774.9 119.7 771.2 115.1 768.1 112.6 C765.0 110.1 761.1 107.4 759.3 108.2Z"/></clipPath>
<path d="M759.3 108.2 C757.5 109.0 757.6 113.4 757.4 117.4 C757.2 121.4 757.8 127.1 758.3 132.0 C758.8 136.9 759.6 142.2 760.3 146.6 C760.9 151.0 761.7 154.1 762.2 158.3 C762.7 162.5 763.5 167.7 763.2 171.9 C762.9 176.1 761.1 181.0 760.3 183.6 C759.5 186.2 759.6 185.5 758.3 187.4 C757.0 189.3 755.2 191.8 752.5 195.2 C749.8 198.6 746.0 202.9 741.9 207.8 C737.8 212.7 732.0 219.5 728.0 224.4 C724.0 229.3 721.3 232.6 717.8 237.4 C714.2 242.2 710.2 248.2 706.7 253.1 C703.2 257.9 699.6 261.9 696.5 266.5 C693.4 271.1 690.9 276.8 688.1 280.4 C685.3 283.9 682.6 285.0 679.8 287.8 C676.9 290.6 672.9 293.6 671.0 297.0 C669.1 300.4 669.6 304.7 668.7 308.1 C667.9 311.5 666.7 314.3 665.9 317.4 C665.1 320.5 665.0 323.9 664.1 326.7 C663.2 329.5 662.8 329.9 660.4 334.1 C658.0 338.3 654.2 344.7 650.0 352.0 C645.8 359.3 640.3 368.7 635.0 378.0 C629.7 387.3 622.8 399.4 618.0 408.0 C613.2 416.6 609.5 423.5 606.1 429.4 C602.7 435.3 600.6 438.9 597.8 443.3 C595.0 447.7 591.7 451.6 589.4 455.8 C587.1 460.0 584.9 464.7 584.2 468.3 C583.5 471.9 582.7 473.9 585.3 477.5 C587.9 481.1 594.7 487.3 600.0 490.0 C605.3 492.7 611.6 493.1 617.2 493.6 C622.9 494.2 629.3 494.7 633.9 493.3 C638.5 491.9 640.8 489.2 645.0 485.0 C649.2 480.8 654.3 474.1 658.9 468.3 C663.5 462.5 669.1 455.4 672.8 450.3 C676.5 445.2 678.5 442.1 681.1 437.6 C683.7 433.1 686.0 427.2 688.1 423.1 C690.2 419.1 692.0 416.8 693.6 413.3 C695.2 409.8 696.2 405.7 697.8 402.2 C699.4 398.7 701.0 395.7 703.3 392.5 C705.6 389.3 708.5 386.5 711.7 382.8 C715.0 379.1 719.1 374.7 722.8 370.3 C726.5 365.9 730.4 360.6 733.9 356.4 C737.4 352.2 740.1 348.6 743.6 345.3 C747.1 342.1 752.1 338.8 754.7 336.9 C757.3 334.9 759.8 335.0 759.4 333.6 C759.0 332.2 754.0 330.9 752.5 328.5 C751.0 326.1 750.8 323.0 750.6 319.3 C750.4 315.6 750.4 311.2 751.1 306.3 C751.8 301.4 753.4 295.0 754.8 289.6 C756.2 284.2 758.0 278.2 759.4 273.9 C760.8 269.6 761.1 268.1 763.1 263.6 C765.1 259.1 768.9 253.7 771.5 246.7 C774.1 239.7 776.6 229.7 778.9 221.7 C781.2 213.7 783.5 205.3 785.4 198.5 C787.3 191.7 788.9 189.1 790.4 180.6 C791.9 172.1 794.1 153.9 794.3 147.6 C794.5 141.3 792.8 145.0 791.4 142.7 C790.0 140.4 787.9 137.2 785.6 134.0 C783.3 130.8 780.7 126.9 777.8 123.3 C774.9 119.7 771.2 115.1 768.1 112.6 C765.0 110.1 761.1 107.4 759.3 108.2Z" fill="url(#gfG)"/>
<g clip-path="url(#cpF)">
<path d="M740.0 200.0 L700.0 250.0 L650.0 300.0 L640.0 340.0 L600.0 420.0 L570.0 470.0 L575.0 490.0 L598.0 494.0 L606.1 484.0 L617.2 470.0 L631.1 450.0 L645.0 428.0 L658.9 405.0 L667.2 388.3 L675.6 371.7 L686.7 352.0 L692.2 345.0 L700.0 336.0 L708.5 323.0 L715.9 310.0 L721.5 298.9 L727.0 287.8 L732.6 275.7 L738.0 263.0 L749.3 239.3 L753.0 231.9 L756.7 221.7 L759.4 207.8 L760.4 192.0 L758.5 185.6 Z" fill="url(#gfU)"/>
<path d="M652.0 352.0 L628.0 392.0 L604.0 436.0 L594.0 462.0" fill="none" stroke="#a6a8a6" stroke-width="9" opacity=".55" filter="url(#bl3)"/>
<path d="M672.0 362.0 L648.0 402.0 L626.0 440.0 L612.0 466.0" fill="none" stroke="#a0a2a0" stroke-width="7" opacity=".5" filter="url(#bl3)"/>
<path d="M664.0 352.0 L640.0 396.0 L616.0 438.0 L603.0 468.0" fill="none" stroke="#50524e" stroke-width="2" opacity=".5" filter="url(#bl1)"/>
<path d="M699.0 346.0 L688.0 368.0 L676.0 392.0 L662.0 416.0 L648.0 438.0" fill="none" stroke="#2c2e22" stroke-width="16" opacity=".88" stroke-linecap="round" filter="url(#bl3)"/>
<path d="M648.0 438.0 L634.0 460.0 L620.0 480.0" fill="none" stroke="#4a4c38" stroke-width="15" opacity=".72" stroke-linecap="round" filter="url(#bl3)"/>
<path d="M748.0 322.0 L742.0 338.0 L722.0 360.0 L704.0 384.0 L692.0 408.0" fill="none" stroke="#d6dabf" stroke-width="7" opacity=".6" stroke-linecap="round" filter="url(#bl3)"/>
<path d="M759.3 108.2 L757.0 118.0 L758.3 132.0 L760.3 146.6 L763.0 172.0 L772.0 162.0 L781.7 158.3 L763.2 123.3 Z" fill="#8c8e76" opacity=".5"/>
<path d="M763.2 123.3 L781.7 158.3" stroke="#6e705c" stroke-width="1.2" opacity=".8"/>
</g>
<path d="M782.3 148.9 C785.5 145.4 790.2 147.9 794.3 147.0 C798.4 146.1 801.5 144.7 806.9 143.7 C812.2 142.7 820.7 141.4 826.4 140.8 C832.1 140.2 837.3 139.9 841.0 140.0 C844.7 140.1 847.0 140.5 848.7 141.3 C850.4 142.1 851.2 143.2 851.2 144.7 C851.2 146.2 850.4 148.4 848.7 150.5 C847.0 152.6 844.7 154.7 841.0 157.3 C837.3 159.9 832.1 163.2 826.4 166.1 C820.7 169.0 813.1 172.3 806.9 174.8 C800.7 177.3 794.8 179.8 789.0 181.0 C783.2 182.2 774.2 184.0 771.9 181.8 C769.6 179.6 773.3 173.5 775.0 168.0 C776.7 162.5 779.1 152.4 782.3 148.9Z" fill="url(#gst)"/>
<path d="M782.3 148.9 C785.5 145.4 790.2 147.9 794.3 147.0 C798.4 146.1 801.5 144.7 806.9 143.7 C812.2 142.7 820.7 141.4 826.4 140.8 C832.1 140.2 837.3 139.9 841.0 140.0 C844.7 140.1 847.0 140.5 848.7 141.3 C850.4 142.1 851.2 143.2 851.2 144.7 C851.2 146.2 850.4 148.4 848.7 150.5 C847.0 152.6 844.7 154.7 841.0 157.3 C837.3 159.9 832.1 163.2 826.4 166.1 C820.7 169.0 813.1 172.3 806.9 174.8 C800.7 177.3 794.8 179.8 789.0 181.0 C783.2 182.2 774.2 184.0 771.9 181.8 C769.6 179.6 773.3 173.5 775.0 168.0 C776.7 162.5 779.1 152.4 782.3 148.9Z" fill="none" stroke="#5c5e5c" stroke-width="1.6" opacity=".6"/>
<path d="M752.3 254.7 L758.8 240.3" stroke="#e0e0d6" stroke-width="2.4" opacity=".7"/>
<path d="M658.5 423 L631.5 465" stroke="#5c563e" stroke-width="3.6" stroke-dasharray="5 1.4" opacity=".95"/>
<path d="M696.5 266.5 C692.5 267.9 690.9 276.8 688.1 280.4 C685.3 283.9 682.6 285.0 679.8 287.8 C676.9 290.6 672.9 293.6 671.0 297.0 C669.1 300.4 669.6 304.7 668.7 308.1 C667.9 311.5 666.7 314.3 665.9 317.4 C665.1 320.5 662.4 325.3 664.1 326.7 C665.8 328.1 672.4 326.6 676.0 326.0 C679.6 325.4 682.0 326.7 686.0 323.0 C690.0 319.3 695.0 310.8 700.0 304.0 C705.0 297.2 714.0 287.3 716.0 282.0 C718.0 276.7 715.2 274.6 712.0 272.0 C708.8 269.4 700.5 265.1 696.5 266.5Z" fill="#8fb0c2" opacity=".9"/>
<path d="M698.0 268.0 C700.8 266.5 704.5 268.2 708.0 270.0 C711.5 271.8 718.3 275.0 719.0 279.0 C719.7 283.0 715.2 288.8 712.0 294.0 C708.8 299.2 704.3 305.0 700.0 310.0 C695.7 315.0 690.3 321.5 686.0 324.0 C681.7 326.5 676.3 326.7 674.0 325.0 C671.7 323.3 671.7 318.0 672.0 314.0 C672.3 310.0 674.0 305.0 676.0 301.0 C678.0 297.0 681.5 293.7 684.0 290.0 C686.5 286.3 688.7 282.7 691.0 279.0 C693.3 275.3 695.2 269.5 698.0 268.0Z" fill="#3d3f3a"/>
<path d="M700.0 271.0 C702.3 269.8 707.7 272.0 710.0 274.0 C712.3 276.0 715.0 280.7 714.0 283.0 C713.0 285.3 707.0 288.3 704.0 288.0 C701.0 287.7 696.7 283.8 696.0 281.0 C695.3 278.2 697.7 272.2 700.0 271.0Z" fill="#565852"/>
<ellipse cx="691" cy="304" rx="4.4" ry="7.6" transform="rotate(22 691 304)" fill="#6e5c40"/>
<ellipse cx="690.5" cy="312" rx="3.6" ry="3" fill="#9a8454"/>
<circle cx="683.8" cy="291" r="4" fill="#5c4c38"/>
<circle cx="672" cy="298" r="2.6" fill="#4c463a"/>
<path d="M669 306 L684 303.5" stroke="#b8a050" stroke-width="1" opacity=".9"/>
<path d="M664.5 326 L668.5 308 L680 290" stroke="#cfd6d6" stroke-width=".9" opacity=".75" fill="none"/>
<path d="M697 283 L709 297" stroke="#c8a830" stroke-width="1.2" stroke-dasharray="1.5 2" opacity=".9"/>
<path d="M721 279 L686.5 325.5 L664.5 327.5" stroke="#2c2e2a" stroke-width="2.2" fill="none" stroke-linejoin="round"/>
<path d="M718.2 201.1 L727.8 224.0" stroke="#3a3c3a" stroke-width="1.3"/>
<g transform="translate(879.0 380.0) rotate(-17)"><ellipse rx="34.5" ry="24.5" fill="#545568"/><ellipse rx="22" ry="15.5" fill="#d9d9d9"/></g>
<g transform="translate(528.9 383.9) rotate(-27)"><ellipse rx="23.8" ry="16.5" fill="#555668"/><ellipse rx="15.2" ry="10.6" fill="#dedede"/></g>
<g transform="translate(739.2 262.6) rotate(-13)"><ellipse rx="13.6" ry="21.2" fill="#3a3c3e"/><ellipse cx="1.2" cy="0.6" rx="8.6" ry="13.6" fill="#a9aba4"/></g>
<text transform="translate(730.0 311.9) rotate(-65)" font-family="Liberation Sans,sans-serif" font-style="italic" font-size="20" fill="#dcdcd2" opacity=".9">RN</text>
<rect x="818.5" y="419.0" width="12" height="6" fill="#a4402e"/>
<rect x="861.8" y="413.0" width="12" height="6" fill="#a4402e"/>
<rect x="508.6" y="406.4" width="7" height="5" fill="#98352a"/>
<rect x="532.6" y="411.9" width="7" height="5" fill="#98352a"/>
<rect x="727.0" y="423.3" width="16" height="4" fill="#d87a40" opacity=".8"/>
<rect x="590.7" y="419.4" width="13" height="4" fill="#d87a40" opacity=".8"/>
<path d="M588.0 480.1 C584.9 476.0 576.0 464.9 568.7 456.1 C561.3 447.4 548.2 432.5 543.9 427.8 C539.7 423.2 539.5 423.4 543.3 428.4 C547.1 433.3 559.5 448.9 566.8 457.7 C574.1 466.4 583.5 477.1 587.0 480.9 C590.6 484.6 591.0 484.2 588.0 480.1Z" fill="#17181a"/><path d="M548.4 433.9 L543.1 427.5" stroke="#e8c860" stroke-width="1.5" stroke-linecap="round"/>
<path d="M582.1 494.4 C578.6 493.4 568.6 491.3 560.6 489.9 C552.6 488.4 538.4 486.5 534.0 486.0 C529.5 485.5 529.5 485.8 533.8 486.8 C538.2 487.9 552.1 490.9 560.1 492.4 C568.1 493.9 578.2 495.3 581.9 495.6 C585.6 496.0 585.7 495.3 582.1 494.4Z" fill="#17181a"/><path d="M539.2 487.3 L533.3 486.3" stroke="#e8c860" stroke-width="1.5" stroke-linecap="round"/>
<path d="M610.7 501.7 C616.0 503.7 630.9 506.7 643.0 507.5 C655.0 508.4 676.3 507.5 683.0 506.6 C689.8 505.7 689.9 504.1 683.4 502.2 C676.9 500.2 656.0 495.9 644.0 494.8 C632.0 493.6 616.8 494.2 611.3 495.3 C605.7 496.5 605.5 499.7 610.7 501.7Z" fill="#17181a"/><path d="M677.4 503.9 L684.1 504.5" stroke="#e8c860" stroke-width="6.1" stroke-linecap="round"/>
<path d="M603.9 509.1 C606.3 513.6 614.6 524.4 622.4 532.0 C630.2 539.6 645.2 551.3 650.4 554.6 C655.6 557.9 656.6 556.8 653.4 551.6 C650.1 546.4 638.5 531.3 630.9 523.5 C623.4 515.7 612.6 507.3 608.1 504.9 C603.6 502.5 601.5 504.6 603.9 509.1Z" fill="#17181a"/><path d="M648.2 549.4 L652.5 553.7" stroke="#e8c860" stroke-width="5.7" stroke-linecap="round"/>
<path d="M586.0 481.0 C582.9 481.7 582.8 487.8 581.5 492.0 C580.2 496.2 578.9 501.7 578.2 506.0 C577.5 510.3 577.2 514.5 577.4 518.0 C577.6 521.5 578.1 524.6 579.4 526.7 C580.7 528.8 582.9 530.6 585.3 530.8 C587.7 531.0 590.6 530.2 593.6 528.1 C596.6 526.0 600.3 522.2 603.3 518.3 C606.3 514.3 609.8 508.4 611.7 504.4 C613.6 500.3 614.6 496.3 614.6 494.0 C614.6 491.7 614.4 491.5 612.0 490.5 C609.6 489.5 604.3 489.6 600.0 488.0 C595.7 486.4 589.1 480.3 586.0 481.0Z" fill="url(#gsp)"/>
<path d="M583 493 Q597 494 612.5 501" stroke="#5a5c58" stroke-width="1" fill="none" opacity=".7"/>
<path d="M586.0 482.0 C587.3 480.4 590.5 482.3 591.0 484.0 C591.5 485.7 590.3 490.4 589.0 492.0 C587.7 493.6 583.5 495.2 583.0 493.5 C582.5 491.8 584.7 483.6 586.0 482.0Z" fill="#141414" opacity=".85"/>
<path d="M609.0 494.0 C610.3 493.0 614.3 495.2 615.0 497.0 C615.7 498.8 614.3 504.0 613.0 505.0 C611.7 506.0 607.7 504.8 607.0 503.0 C606.3 501.2 607.7 495.0 609.0 494.0Z" fill="#141414" opacity=".85"/>
<rect x="625.5" y="498" width="3" height="2.6" fill="#c08a1c" transform="rotate(8 627 499)"/>
<rect x="618" y="517.3" width="3" height="2.6" fill="#c08a1c" transform="rotate(45 619 518)"/>
</svg>
<div class="box" style="left:1123px;top:107px;width:374px"></div>
<div class="box" style="left:1551px;top:107px;width:39px"></div>
<div class="box" style="left:1123px;top:197px;width:467px"></div>
<div class="box" style="left:1123px;top:309.5px;width:467px"></div>
<div class="box" style="left:1123px;top:399.5px;width:467px"></div>
<div class="box" style="left:1123px;top:512px;width:467px"></div>
<div class="box" style="left:1123px;top:602px;width:467px"></div>
<div class="box" style="left:510px;top:810px;width:113px;background:#a9a9a9;border-color:#181818"></div>
<div class="box" style="left:510px;top:878px;width:113px;background:#a9a9a9;border-color:#181818"></div>
<div class="box" style="left:915px;top:810px;width:113px;background:#a9a9a9;border-color:#181818"></div>
<div class="box" style="left:915px;top:878px;width:113px;background:#a9a9a9;border-color:#181818"></div>
<div class="box" style="left:1410px;top:810px;width:90px;background:#a9a9a9;border-color:#181818"></div>
<div class="box" style="left:1410px;top:878px;width:90px;background:#a9a9a9;border-color:#181818"></div>
<div class="sep" style="left:1123px;top:264.5px;width:512px"></div>
<div class="sep" style="left:1123px;top:467px;width:512px"></div>
<div class="sep" style="left:285px;top:945px;width:1350px"></div>
<span id="t_arming" class="t b" style="left:296.60px;top:6.07px;letter-spacing:0.278px">Arming</span>
<span id="t_name" class="t b" style="left:1380.20px;top:6.07px;letter-spacing:-0.287px">Иван 'Ваня' Иванов</span>
<span id="t_aircraft" class="t " style="left:1336.70px;top:67.97px;letter-spacing:-0.350px">Aircraft</span>
<span id="t_wl" class="t " style="left:1272.60px;top:157.67px;letter-spacing:0.120px">Weapon Loadout</span>
<span id="t_af" class="t " style="left:1322.97px;top:270.17px;letter-spacing:0.000px">Air Force</span>
<span id="t_sq" class="t " style="left:1319.11px;top:360.17px;letter-spacing:0.000px">Squadron</span>
<span id="t_skin" class="t " style="left:1352.50px;top:472.67px;letter-spacing:0.000px">Skin</span>
<span id="t_pilot" class="t " style="left:1350.67px;top:562.67px;letter-spacing:0.000px">Pilot</span>
<span id="t_mark" class="t " style="left:1123.60px;top:684.07px;letter-spacing:0.011px">Markings On:</span>
<span id="t_wcd" class="t " style="left:489.10px;top:748.87px;letter-spacing:0.034px">Weapon Convergence Distances</span>
<span id="t_mg" class="t " style="left:316.80px;top:815.67px;letter-spacing:0.066px">Machine Guns:</span>
<span id="t_can" class="t " style="left:384.10px;top:883.97px;letter-spacing:0.103px">Cannons:</span>
<span id="t_m1" class="t " style="left:628.70px;top:815.67px;letter-spacing:-0.808px">m.</span>
<span id="t_m2" class="t " style="left:628.70px;top:883.97px;letter-spacing:-0.808px">m.</span>
<span id="t_rk" class="t " style="left:798.80px;top:815.67px;letter-spacing:0.280px">Rockets:</span>
<span id="t_rd" class="t " style="left:737.90px;top:883.97px;letter-spacing:-0.111px">Rocket Delay:</span>
<span id="t_m3" class="t " style="left:1033.70px;top:815.67px;letter-spacing:-0.808px">m.</span>
<span id="t_s1" class="t " style="left:1033.90px;top:883.97px;letter-spacing:-0.365px">sec.</span>
<span id="t_bd" class="t " style="left:1245.70px;top:815.67px;letter-spacing:0.081px">Bomb Delay:</span>
<span id="t_s2" class="t " style="left:1505.90px;top:815.67px;letter-spacing:-0.365px">sec.</span>
<span id="t_fq" class="t " style="left:1230.40px;top:883.97px;letter-spacing:0.181px">Fuel Quantity:</span>
<span id="t_pc" class="t " style="left:1552.00px;top:883.97px;letter-spacing:0.000px">%</span>
<span id="t_apply" class="t " style="left:375.60px;top:984.87px;letter-spacing:-0.010px">Apply</span>
<span id="t_joy" class="t " style="left:698.90px;top:984.57px;letter-spacing:-0.178px">Joystick</span>
<span id="t_v_air" class="t k" style="left:1126.40px;top:112.97px;letter-spacing:-0.083px">SeafireMkXV</span>
<span id="t_v_n" class="t k" style="left:1559.90px;top:112.97px;letter-spacing:0.000px">1</span>
<span id="t_v_wl" class="t k" style="left:1125.60px;top:202.87px;letter-spacing:0.000px">default</span>
<span id="t_v_af" class="t k" style="left:1125.90px;top:315.37px;letter-spacing:0.000px">RN</span>
<span id="t_v_sq" class="t k" style="left:1126.10px;top:405.37px;letter-spacing:0.000px">&lt;none&gt;</span>
<span id="t_v_skin" class="t k" style="left:1125.90px;top:517.87px;letter-spacing:0.000px">Default</span>
<span id="t_v_pilot" class="t k" style="left:1125.90px;top:607.87px;letter-spacing:0.000px">Default</span>
<span id="t_v_mg" class="t k k2" style="left:512.30px;top:815.67px;letter-spacing:0.969px">300.0</span>
<span id="t_v_can" class="t k k2" style="left:512.30px;top:883.97px;letter-spacing:0.969px">300.0</span>
<span id="t_v_rk" class="t k k2" style="left:917.40px;top:815.67px;letter-spacing:0.969px">200.0</span>
<span id="t_v_rd" class="t k k2" style="left:918.20px;top:883.97px;letter-spacing:0.333px">7.0</span>
<span id="t_v_bd" class="t k k2" style="left:1412.60px;top:815.67px;letter-spacing:0.333px">0.2</span>
<span id="t_v_fq" class="t k k2" style="left:1412.90px;top:883.97px;letter-spacing:0.406px">100</span>
<svg class="abs" style="left:0;top:0" width="1920" height="1080" viewBox="0 0 1920 1080">
<defs>
<linearGradient id="gring" x1="0.15" y1="0.1" x2="0.85" y2="0.9"><stop offset="0" stop-color="#93938f"/><stop offset="0.6" stop-color="#84847f"/><stop offset="1" stop-color="#686864"/></linearGradient>
<radialGradient id="gdisc" cx="0.62" cy="0.62" r="0.7"><stop offset="0" stop-color="#6a6762"/><stop offset="0.45" stop-color="#4a4743"/><stop offset="0.8" stop-color="#33312e"/><stop offset="1" stop-color="#201f1d"/></radialGradient>
<linearGradient id="gtri" x1="0" y1="0" x2="1" y2="0.25"><stop offset="0" stop-color="#a4a4a4"/><stop offset="0.3" stop-color="#f4f4f4"/><stop offset="0.5" stop-color="#ffffff"/><stop offset="0.72" stop-color="#c4c4c4"/><stop offset="1" stop-color="#6e6e6e"/></linearGradient>
<radialGradient id="gsil" cx="0.3" cy="0.28" r="0.9"><stop offset="0" stop-color="#dde2e2"/><stop offset="0.4" stop-color="#bcc4c6"/><stop offset="0.72" stop-color="#94a2aa"/><stop offset="1" stop-color="#586874"/></radialGradient>
<radialGradient id="gred" cx="0.35" cy="0.32" r="0.75"><stop offset="0" stop-color="#d2323a"/><stop offset="0.5" stop-color="#b31c26"/><stop offset="1" stop-color="#700e16"/></radialGradient>
<radialGradient id="gbrn" cx="0.35" cy="0.35" r="0.75"><stop offset="0" stop-color="#60280e"/><stop offset="0.5" stop-color="#431a0c"/><stop offset="1" stop-color="#2a0f08"/></radialGradient>
<radialGradient id="gglow" cx="0.5" cy="0.5" r="0.5"><stop offset="0" stop-color="#fff0b4"/><stop offset="0.2" stop-color="#ffc470"/><stop offset="0.4" stop-color="#f6702a"/><stop offset="0.56" stop-color="#e2521e"/><stop offset="0.7" stop-color="#b83a18" stop-opacity=".62"/><stop offset="0.85" stop-color="#9a3018" stop-opacity=".2"/><stop offset="1" stop-color="#903018" stop-opacity="0"/></radialGradient>
<radialGradient id="gsph" cx="0.3" cy="0.32" r="0.85"><stop offset="0" stop-color="#ece6e6"/><stop offset="0.4" stop-color="#cbbfc0"/><stop offset="0.75" stop-color="#958a8e"/><stop offset="1" stop-color="#5c5458"/></radialGradient>
<filter id="b1"><feGaussianBlur stdDeviation="0.7"/></filter>
<filter id="b2"><feGaussianBlur stdDeviation="1.6"/></filter>
</defs>
<g transform="translate(1520.0 129.5)"><circle r="22" fill="url(#gring)"/><circle cx="1.5" cy="1.4" r="17.7" fill="url(#gdisc)"/><ellipse cx="10.5" cy="6" rx="4" ry="6.5" transform="rotate(25 10.5 6)" fill="#8a8780" opacity=".55" filter="url(#b1)"/><path d="M-6.5 -6 L11.8 -6 L2.3 14.6 Z" fill="url(#gtri)"/></g>
<g transform="translate(1612.8 129.5)"><circle r="22" fill="url(#gring)"/><circle cx="1.5" cy="1.4" r="17.7" fill="url(#gdisc)"/><ellipse cx="10.5" cy="6" rx="4" ry="6.5" transform="rotate(25 10.5 6)" fill="#8a8780" opacity=".55" filter="url(#b1)"/><path d="M-6.5 -6 L11.8 -6 L2.3 14.6 Z" fill="url(#gtri)"/></g>
<g transform="translate(1612.8 219.4)"><circle r="22" fill="url(#gring)"/><circle cx="1.5" cy="1.4" r="17.7" fill="url(#gdisc)"/><ellipse cx="10.5" cy="6" rx="4" ry="6.5" transform="rotate(25 10.5 6)" fill="#8a8780" opacity=".55" filter="url(#b1)"/><path d="M-6.5 -6 L11.8 -6 L2.3 14.6 Z" fill="url(#gtri)"/></g>
<g transform="translate(1612.8 331.9)"><circle r="22" fill="url(#gring)"/><circle cx="1.5" cy="1.4" r="17.7" fill="url(#gdisc)"/><ellipse cx="10.5" cy="6" rx="4" ry="6.5" transform="rotate(25 10.5 6)" fill="#8a8780" opacity=".55" filter="url(#b1)"/><path d="M-6.5 -6 L11.8 -6 L2.3 14.6 Z" fill="url(#gtri)"/></g>
<g transform="translate(1612.8 421.9)"><circle r="22" fill="url(#gring)"/><circle cx="1.5" cy="1.4" r="17.7" fill="url(#gdisc)"/><ellipse cx="10.5" cy="6" rx="4" ry="6.5" transform="rotate(25 10.5 6)" fill="#8a8780" opacity=".55" filter="url(#b1)"/><path d="M-6.5 -6 L11.8 -6 L2.3 14.6 Z" fill="url(#gtri)"/></g>
<g transform="translate(1612.8 534.4)"><circle r="22" fill="url(#gring)"/><circle cx="1.5" cy="1.4" r="17.7" fill="url(#gdisc)"/><ellipse cx="10.5" cy="6" rx="4" ry="6.5" transform="rotate(25 10.5 6)" fill="#8a8780" opacity=".55" filter="url(#b1)"/><path d="M-6.5 -6 L11.8 -6 L2.3 14.6 Z" fill="url(#gtri)"/></g>
<g transform="translate(1612.8 624.4)"><circle r="22" fill="url(#gring)"/><circle cx="1.5" cy="1.4" r="17.7" fill="url(#gdisc)"/><ellipse cx="10.5" cy="6" rx="4" ry="6.5" transform="rotate(25 10.5 6)" fill="#8a8780" opacity=".55" filter="url(#b1)"/><path d="M-6.5 -6 L11.8 -6 L2.3 14.6 Z" fill="url(#gtri)"/></g>
<g transform="translate(1522.9 900.4)"><circle r="22" fill="url(#gring)"/><circle cx="1.5" cy="1.4" r="17.7" fill="url(#gdisc)"/><ellipse cx="10.5" cy="6" rx="4" ry="6.5" transform="rotate(25 10.5 6)" fill="#8a8780" opacity=".55" filter="url(#b1)"/><path d="M-6.5 -6 L11.8 -6 L2.3 14.6 Z" fill="url(#gtri)"/></g>
<g transform="translate(319.0 1002.0)"><ellipse cx="25" cy="13" rx="9" ry="12" fill="#161616" opacity=".85" filter="url(#b2)"/><circle r="29" fill="url(#gsil)"/><circle r="27.2" fill="none" stroke="#7f96a8" stroke-width="3.4" opacity=".55"/><circle r="29" fill="none" stroke="#4a5660" stroke-width="1" opacity=".5"/><path d="M20.5 -20.5 A29 29 0 0 1 3 28.8 L2.5 23.5 A23.5 23.5 0 0 0 16.5 -16.5 Z" fill="#2f3b46" opacity=".9" filter="url(#b1)"/><ellipse cx="13" cy="8" rx="10.5" ry="13.5" transform="rotate(-35 13 8)" fill="#0a0a0a" opacity=".92" filter="url(#b1)"/><circle cx="0.3" cy="0.8" r="17.2" fill="#b4d2ce"/><circle cx="0.3" cy="0.8" r="15.7" fill="#7d8d8d"/><circle cx="0.5" cy="1.2" r="14" fill="url(#gred)"/><circle cx="-5" cy="-3" r="1.6" fill="#ffd8d8"/></g>
<g transform="translate(642.0 1002.0)"><ellipse cx="25" cy="13" rx="9" ry="12" fill="#161616" opacity=".85" filter="url(#b2)"/><circle r="29" fill="url(#gsil)"/><circle r="27.2" fill="none" stroke="#7f96a8" stroke-width="3.4" opacity=".55"/><circle r="29" fill="none" stroke="#4a5660" stroke-width="1" opacity=".5"/><path d="M20.5 -20.5 A29 29 0 0 1 3 28.8 L2.5 23.5 A23.5 23.5 0 0 0 16.5 -16.5 Z" fill="#2f3b46" opacity=".9" filter="url(#b1)"/><ellipse cx="13" cy="8" rx="10.5" ry="13.5" transform="rotate(-35 13 8)" fill="#0a0a0a" opacity=".92" filter="url(#b1)"/><circle cx="0.3" cy="0.8" r="17.2" fill="#b4d2ce"/><circle cx="0.3" cy="0.8" r="15.7" fill="#7d8d8d"/><circle cx="0.5" cy="1.2" r="14" fill="url(#gbrn)"/><rect x="-7.5" y="-4.5" width="5" height="4.5" fill="#f0a820"/><rect x="-10" y="-4" width="2" height="3.5" fill="#c07818"/><rect x="-1" y="10" width="3.5" height="2" fill="#c08030"/></g>
<circle cx="1515.4" cy="700" r="21" fill="url(#gglow)"/>
<circle cx="1564" cy="699.6" r="20" fill="url(#gsph)"/>
<path d="M1566 706 C1573 705 1577 697 1574 688 C1583 694 1585 707 1577 716 C1571 718 1566 712 1566 706 Z" fill="#4a363a" opacity=".85" filter="url(#b1)"/>
<ellipse cx="1554" cy="685.5" rx="5" ry="3.2" transform="rotate(-35 1554 685.5)" fill="#ffffff" opacity=".8" filter="url(#b1)"/>
<rect x="1543.5" y="692.8" width="24" height="11.6" rx="2.5" fill="#121212"/>
<ellipse cx="1566" cy="698.5" rx="7" ry="8" fill="#1a181a"/>
<ellipse cx="1535.2" cy="699.3" rx="6.8" ry="7.2" fill="#e5978a"/>
<ellipse cx="1534" cy="697.5" rx="3.5" ry="3.8" fill="#f0ada0" opacity=".8"/>
<path d="M1302.3 530 L1314 541.7 L1308.2 541.7 L1302.3 547.8 Z" fill="#f7cf4a" stroke="#0e0e28" stroke-width="1.1" stroke-linejoin="miter"/>
</svg>
</body>
</html>
